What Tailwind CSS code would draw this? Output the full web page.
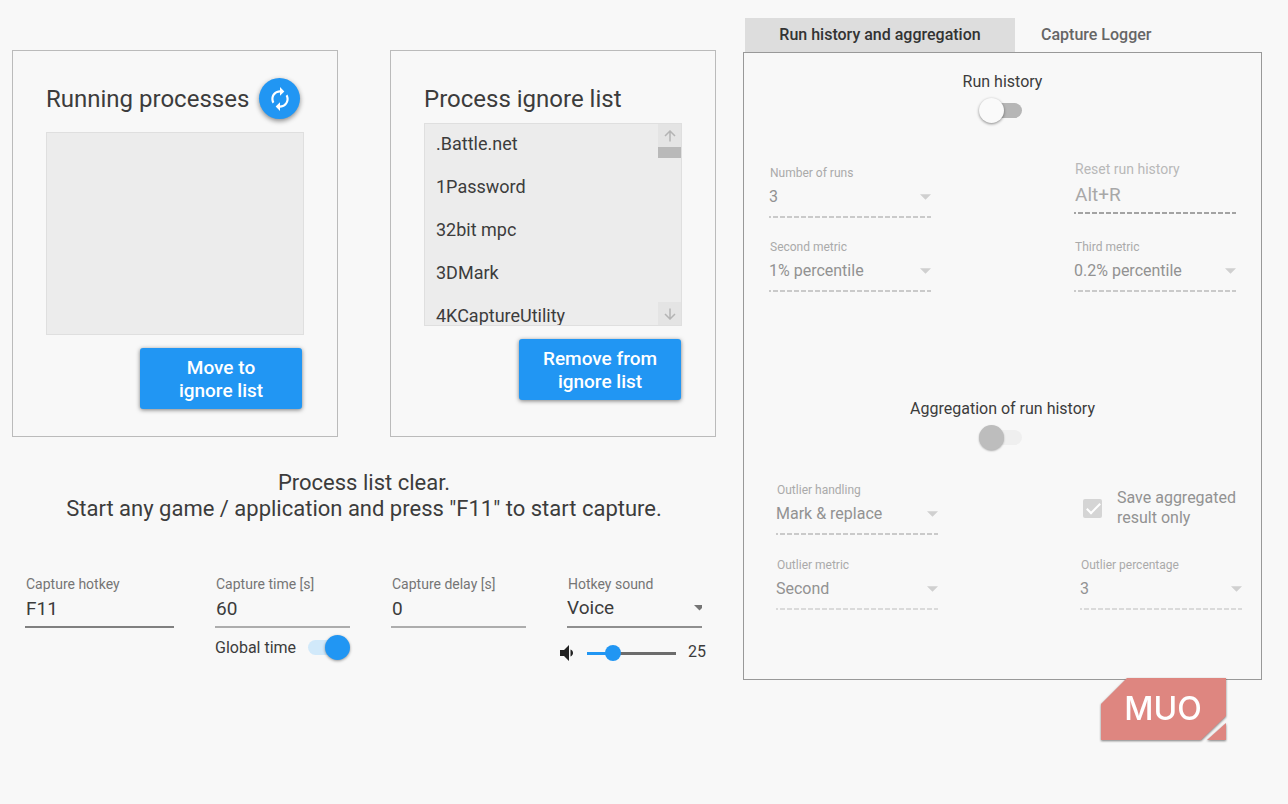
<!DOCTYPE html>
<html lang="en">
<head>
    <meta charset="UTF-8">
    <meta name="viewport" content="width=device-width, initial-scale=1.0">
    <title>Capture</title>
    <script src="https://cdn.jsdelivr.net/npm/@tailwindcss/browser@4"></script>
</head>
<body class="bg-[#f8f8f8] text-[#3c3c3c] font-[Roboto,sans-serif] min-h-screen">
    <div class="grid grid-cols-[704fr_519fr] gap-[27px] pl-3 pr-[26px]">

        <!-- Left: process lists and capture options -->
        <main class="pt-[50px] min-w-0">
            <div class="grid grid-cols-2 gap-[52px]">
                <section class="border border-[#bbb] px-[33px] pt-[27px] pb-[27px]">
                    <div class="flex items-center justify-between h-[41px] pr-1">
                        <h2 class="text-[24px] whitespace-nowrap">Running processes</h2>
                        <button type="button" aria-label="Refresh" class="w-[41px] h-[41px] shrink-0 rounded-full bg-[#2196f3] flex items-center justify-center shadow-[0_2px_5px_rgba(0,0,0,0.45)]">
                            <svg class="w-[26px] h-[26px]" viewBox="0 0 24 24" fill="#fff"><path d="M12 6v3l4-4-4-4v3c-4.42 0-8 3.58-8 8 0 1.57.46 3.03 1.24 4.26L6.7 14.8c-.45-.83-.7-1.79-.7-2.8 0-3.31 2.69-6 6-6zm6.76 1.74L17.3 9.2c.44.84.7 1.79.7 2.8 0 3.31-2.69 6-6 6v-3l-4 4 4 4v-3c4.42 0 8-3.58 8-8 0-1.57-.46-3.03-1.24-4.26z"/></svg>
                        </button>
                    </div>
                    <div class="mt-[13px] h-[203px] bg-[#ececec] border border-[#dfdfdf]"></div>
                    <div class="mt-[13px] flex justify-end pr-[2px]">
                        <button type="button" class="w-[162px] h-[61px] rounded-[3px] bg-[#2196f3] text-white text-[19px] leading-[23px] font-medium shadow-[0_1px_4px_rgba(0,0,0,0.5)]">Move to<br>ignore list</button>
                    </div>
                </section>

                <section class="border border-[#bbb] px-[33px] pt-[27px] pb-[27px]">
                    <div class="flex items-center h-[41px]">
                        <h2 class="text-[24px] whitespace-nowrap">Process ignore list</h2>
                    </div>
                    <div class="mt-1 h-[203px] bg-[#ececec] border border-[#dfdfdf] flex overflow-hidden">
                        <ul class="flex-1 text-[18px] leading-[39px] overflow-hidden">
                            <li class="h-[43px] px-[11px]">.Battle.net</li>
                            <li class="h-[43px] px-[11px]">1Password</li>
                            <li class="h-[43px] px-[11px]">32bit mpc</li>
                            <li class="h-[43px] px-[11px]">3DMark</li>
                            <li class="h-[29px] px-[11px]">4KCaptureUtility</li>
                        </ul>
                        <div class="w-[23px] flex flex-col">
                            <button type="button" aria-label="Scroll up" class="h-[23px] bg-[#e4e4e4] flex items-center justify-center">
                                <svg class="w-3 h-3" viewBox="0 0 12 12" fill="none" stroke="#b4b4b4" stroke-width="1.5"><path d="M6 11.5V1.5M1 6l5-5 5 5"/></svg>
                            </button>
                            <div class="h-[11px] bg-[#b9b9b9]"></div>
                            <button type="button" aria-label="Scroll down" class="mt-auto h-[23px] bg-[#e4e4e4] flex items-center justify-center">
                                <svg class="w-3 h-3" viewBox="0 0 12 12" fill="none" stroke="#b4b4b4" stroke-width="1.5"><path d="M6 .5v10M1 6l5 5 5-5"/></svg>
                            </button>
                        </div>
                    </div>
                    <div class="mt-[13px] flex justify-end pr-px">
                        <button type="button" class="w-[162px] h-[61px] rounded-[3px] bg-[#2196f3] text-white text-[19px] leading-[23px] font-medium shadow-[0_1px_4px_rgba(0,0,0,0.5)]">Remove from<br>ignore list</button>
                    </div>
                </section>
            </div>

            <p class="mt-[33px] text-center text-[22px] leading-[26px]">Process list clear.<br>Start any game / application and press "F11" to start capture.</p>

            <div class="mt-[52px] pl-[13px] pr-[14px] grid grid-cols-[149fr_135fr_135fr_135fr] gap-[41px]">
                <div class="min-w-0">
                    <label for="hotkey" class="block pl-px text-[14px] leading-5 text-[#757575]">Capture hotkey</label>
                    <input id="hotkey" type="text" value="F11" class="block w-full h-[34px] pl-px pb-1 text-[19px] border-b-2 border-[#808080] outline-none">
                </div>
                <div class="min-w-0">
                    <label for="time" class="block pl-px text-[14px] leading-5 text-[#757575]">Capture time [s]</label>
                    <input id="time" type="text" value="60" class="block w-full h-[34px] pl-px pb-1 text-[19px] border-b-2 border-[#adadad] outline-none">
                    <div class="mt-[7px] flex items-center justify-between">
                        <label for="global" class="text-[16px] whitespace-nowrap">Global time</label>
                        <input id="global" type="checkbox" checked class="appearance-none relative w-[42px] h-[25px] before:absolute before:left-0 before:top-[5px] before:w-9 before:h-[15px] before:rounded-full before:bg-[#d1e9fa] after:absolute after:right-0 after:top-0 after:w-[25px] after:h-[25px] after:rounded-full after:bg-[#2196f3] after:shadow-[0_1px_3px_rgba(0,0,0,0.4)]">
                    </div>
                </div>
                <div class="min-w-0">
                    <label for="delay" class="block pl-px text-[14px] leading-5 text-[#757575]">Capture delay [s]</label>
                    <input id="delay" type="text" value="0" class="block w-full h-[34px] pl-px pb-1 text-[19px] border-b-2 border-[#adadad] outline-none">
                </div>
                <div class="min-w-0">
                    <label for="sound" class="block pl-px text-[14px] leading-5 text-[#757575]">Hotkey sound</label>
                    <div class="relative">
                        <select id="sound" class="appearance-none block w-full h-[34px] pb-1 text-[19px] border-b-2 border-[#8f8f8f] outline-none">
                            <option>Voice</option>
                        </select>
                        <svg class="pointer-events-none absolute right-0 top-[11px] w-2 h-[6px]" viewBox="0 0 8 6" fill="#757575"><path d="M0 0h8v3L5.500 5.500z"/></svg>
                    </div>
                    <div class="mt-3 -ml-[7px] -mr-1 h-[26px] flex items-center">
                        <svg class="w-[14px] h-4 shrink-0" viewBox="0 0 14 16" fill="#222"><path d="M0 5v6h4l5 5V0L4 5z"/><path d="M10.500 4.500c1.500.6 2.500 1.900 2.500 3.500s-1 2.900-2.500 3.500z"/></svg>
                        <input id="volume" type="range" min="0" max="100" value="25" aria-label="Volume" class="appearance-none ml-[13px] flex-1 min-w-0 h-4 [&::-webkit-slider-runnable-track]:h-4 [&::-webkit-slider-runnable-track]:bg-[linear-gradient(90deg,#2196f3_30%,#6c6c6c_30%)] [&::-webkit-slider-runnable-track]:bg-[length:100%_3px] [&::-webkit-slider-runnable-track]:bg-center [&::-webkit-slider-runnable-track]:bg-no-repeat [&::-webkit-slider-thumb]:appearance-none [&::-webkit-slider-thumb]:w-4 [&::-webkit-slider-thumb]:h-4 [&::-webkit-slider-thumb]:rounded-full [&::-webkit-slider-thumb]:bg-[#2196f3]">
                        <output for="volume" class="ml-3 pb-[2px] text-[16px] leading-5">25</output>
                    </div>
                </div>
            </div>
        </main>

        <!-- Right: run history and aggregation -->
        <aside class="pt-[18px] min-w-0">
            <nav class="flex h-[34px] pl-[2px] text-[16px] font-medium">
                <button type="button" class="w-[270px] bg-[#dddddd] text-[#333]">Run history and aggregation</button>
                <button type="button" class="px-[26px] text-[#666]">Capture Logger</button>
            </nav>
            <section class="border border-[#999] pt-[19px] pb-[69px]">
                <div class="flex flex-col items-center">
                    <label for="history" class="text-[16px] leading-5">Run history</label>
                    <input id="history" type="checkbox" class="appearance-none relative mt-[6px] mr-[5px] w-[43px] h-[25px] before:absolute before:right-0 before:top-[5px] before:w-9 before:h-[15px] before:rounded-full before:bg-[#b6b6b6] after:absolute after:left-0 after:top-0 after:w-[25px] after:h-[25px] after:rounded-full after:bg-[#fafafa] after:shadow-[0_1px_3px_rgba(0,0,0,0.45)]">
                </div>

                <div class="mt-[38px] px-[25px] flex items-start justify-between text-[#929292]">
                    <div class="w-[162px] mt-1">
                        <label for="runs" class="block pl-px text-[12px] leading-4 text-[#aaa]">Number of runs</label>
                        <div class="relative">
                            <select id="runs" disabled class="appearance-none block w-full h-[30px] pt-[2px] text-[16px] opacity-100"><option>3</option></select>
                            <svg class="pointer-events-none absolute right-0 top-[13px] w-[11px] h-[6px]" viewBox="0 0 10 5" fill="#d0d0d0"><path d="M0 0h10L5 5z"/></svg>
                        </div>
                        <div class="mt-[5px] h-[2px] bg-[repeating-linear-gradient(90deg,#cacaca_0_2px,transparent_2px_4px,#cacaca_4px_7px)]"></div>
                    </div>
                    <div class="w-[162px]">
                        <label for="reset" class="block pl-px text-[14px] leading-4 text-[#b8b8b8]">Reset run history</label>
                        <input id="reset" type="text" value="Alt+R" disabled class="block w-full h-[34px] pl-px text-[19px] text-[#a8a8a8]">
                        <div class="mt-px h-[2px] bg-[repeating-linear-gradient(90deg,#a3a3a3_0_2px,transparent_2px_4px,#a3a3a3_4px_7px)]"></div>
                    </div>
                </div>

                <div class="mt-[21px] px-[25px] flex items-start justify-between text-[#929292]">
                    <div class="w-[162px]">
                        <label for="second" class="block pl-px text-[12px] leading-4 text-[#aaa]">Second metric</label>
                        <div class="relative">
                            <select id="second" disabled class="appearance-none block w-full h-[30px] pt-[2px] text-[16px] opacity-100"><option>1% percentile</option></select>
                            <svg class="pointer-events-none absolute right-0 top-[13px] w-[11px] h-[6px]" viewBox="0 0 10 5" fill="#d0d0d0"><path d="M0 0h10L5 5z"/></svg>
                        </div>
                        <div class="mt-[5px] h-[2px] bg-[repeating-linear-gradient(90deg,#cacaca_0_2px,transparent_2px_4px,#cacaca_4px_7px)]"></div>
                    </div>
                    <div class="w-[162px]">
                        <label for="third" class="block pl-px text-[12px] leading-4 text-[#aaa]">Third metric</label>
                        <div class="relative">
                            <select id="third" disabled class="appearance-none block w-full h-[30px] pt-[2px] text-[16px] opacity-100"><option>0.2% percentile</option></select>
                            <svg class="pointer-events-none absolute right-0 top-[13px] w-[11px] h-[6px]" viewBox="0 0 10 5" fill="#d0d0d0"><path d="M0 0h10L5 5z"/></svg>
                        </div>
                        <div class="mt-[5px] h-[2px] bg-[repeating-linear-gradient(90deg,#cacaca_0_2px,transparent_2px_4px,#cacaca_4px_7px)]"></div>
                    </div>
                </div>

                <div class="mt-[107px] flex flex-col items-center">
                    <label for="aggregation" class="text-[16px] leading-5">Aggregation of run history</label>
                    <input id="aggregation" type="checkbox" disabled class="appearance-none relative mt-[6px] mr-[5px] w-[43px] h-[25px] before:absolute before:right-0 before:top-[5px] before:w-9 before:h-[15px] before:rounded-full before:bg-[#efefef] after:absolute after:left-0 after:top-0 after:w-[25px] after:h-[25px] after:rounded-full after:bg-[#bdbdbd] after:shadow-[0_1px_2px_rgba(0,0,0,0.3)]">
                </div>

                <div class="mt-8 pl-8 pr-[19px] flex items-start justify-between text-[#929292]">
                    <div class="w-[162px]">
                        <label for="handling" class="block pl-px text-[12px] leading-4 text-[#aaa]">Outlier handling</label>
                        <div class="relative">
                            <select id="handling" disabled class="appearance-none block w-full h-[30px] pt-[2px] text-[16px] opacity-100"><option>Mark &amp; replace</option></select>
                            <svg class="pointer-events-none absolute right-0 top-[13px] w-[11px] h-[6px]" viewBox="0 0 10 5" fill="#d0d0d0"><path d="M0 0h10L5 5z"/></svg>
                        </div>
                        <div class="mt-[5px] h-[2px] bg-[repeating-linear-gradient(90deg,#cacaca_0_2px,transparent_2px_4px,#cacaca_4px_7px)]"></div>
                    </div>
                    <div class="w-[162px] mt-[6px] pl-[3px] flex items-center gap-[15px]">
                        <input id="save" type="checkbox" checked disabled class="appearance-none shrink-0 relative w-[19px] h-[19px] rounded-[2px] bg-[#d5d5d5] after:absolute after:left-[7px] after:top-px after:w-[7px] after:h-[14px] after:rotate-45 after:border-r-2 after:border-b-2 after:border-white">
                        <label for="save" class="text-[16px] leading-5 whitespace-nowrap">Save aggregated<br>result only</label>
                    </div>
                </div>

                <div class="mt-[22px] pl-8 pr-[19px] flex items-start justify-between text-[#929292]">
                    <div class="w-[162px]">
                        <label for="metric" class="block pl-px text-[12px] leading-4 text-[#aaa]">Outlier metric</label>
                        <div class="relative">
                            <select id="metric" disabled class="appearance-none block w-full h-[30px] pt-[2px] text-[16px] opacity-100"><option>Second</option></select>
                            <svg class="pointer-events-none absolute right-0 top-[13px] w-[11px] h-[6px]" viewBox="0 0 10 5" fill="#d0d0d0"><path d="M0 0h10L5 5z"/></svg>
                        </div>
                        <div class="mt-[5px] h-[2px] bg-[repeating-linear-gradient(90deg,#dadada_0_2px,transparent_2px_4px,#dadada_4px_7px)]"></div>
                    </div>
                    <div class="w-[162px]">
                        <label for="percentage" class="block pl-px text-[12px] leading-4 text-[#aaa]">Outlier percentage</label>
                        <div class="relative">
                            <select id="percentage" disabled class="appearance-none block w-full h-[30px] pt-[2px] text-[16px] opacity-100"><option>3</option></select>
                            <svg class="pointer-events-none absolute right-0 top-[13px] w-[11px] h-[6px]" viewBox="0 0 10 5" fill="#d0d0d0"><path d="M0 0h10L5 5z"/></svg>
                        </div>
                        <div class="mt-[5px] h-[2px] bg-[repeating-linear-gradient(90deg,#dadada_0_2px,transparent_2px_4px,#dadada_4px_7px)]"></div>
                    </div>
                </div>
            </section>

            <svg class="relative ml-auto mr-9 -mt-[2px] w-[125px] h-[64px] overflow-visible drop-shadow-[0_1px_1px_rgba(0,0,0,0.5)]" viewBox="0 0 125 64" role="img" aria-label="MUO">
                <path fill="#de8680" d="M26 0h99v38L100 62H0V26z"/>
                <path fill="#de8680" d="M125 45v17h-19z"/>
                <text x="62" y="42" text-anchor="middle" font-family="Inter, sans-serif" font-size="32" font-weight="500" fill="#fff">MUO</text>
            </svg>
        </aside>
    </div>
</body>
</html>
